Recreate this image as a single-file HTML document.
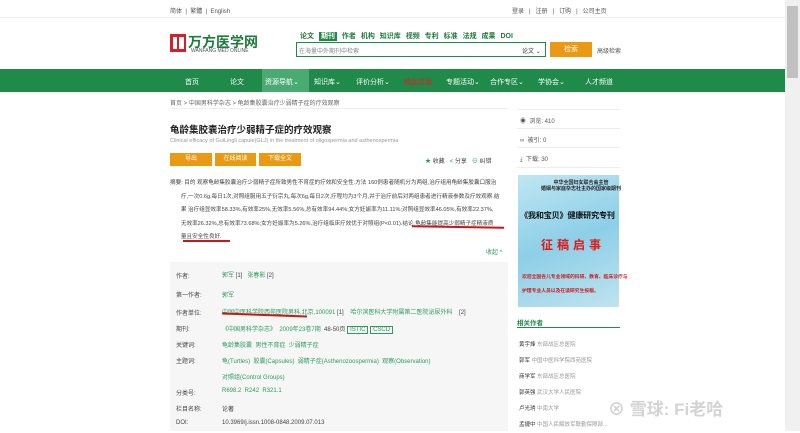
<!DOCTYPE html>
<html><head><meta charset="utf-8"><style>
*{margin:0;padding:0;box-sizing:border-box}
body{width:800px;height:431px;overflow:hidden;background:#fff;font-family:"Liberation Sans","Noto Sans CJK SC",sans-serif;color:#333;position:relative;font-size:6px}
.a{position:absolute;white-space:nowrap}
.g{color:#2e9b5f}
.btn{position:absolute;background:#e99a12;color:#fff;font-size:6px;text-align:center;line-height:13px;height:13px}
.lab{position:absolute;left:176px;color:#444;font-size:6px}
.val{position:absolute;left:222px;font-size:6px;color:#2e9b5f;white-space:nowrap}
.nav span{position:absolute;top:77px;color:#fff;font-size:7px}
</style></head><body>
<div class="a" style="left:170px;top:6px;color:#555">简体 &nbsp;|&nbsp; 繁體 &nbsp;|&nbsp; English</div>
<div class="a" style="left:512px;top:6px;color:#555">登录 &nbsp;&nbsp;| &nbsp;&nbsp;注册 &nbsp;&nbsp;| &nbsp;&nbsp;订购 &nbsp;&nbsp;| &nbsp;&nbsp;公司主页</div>
<div class="a" style="left:0;top:17px;width:785px;height:1px;background:#eee"></div>
<div class="a" style="left:170px;top:34px;width:16px;height:18px;background:#d3202a"></div>
<div class="a" style="left:173px;top:37px;width:4px;height:12px;background:#fff"></div>
<div class="a" style="left:179px;top:37px;width:5px;height:12px;background:#fff"></div>
<div class="a" style="left:188px;top:32px;font-size:14px;font-weight:bold;color:#1f7a3c">万方医学网</div>
<div class="a" style="left:191px;top:48px;font-size:5px;color:#555">WANFANG MED ONLINE</div>
<div class="a" style="left:300px;top:31px;font-size:7px;font-weight:bold;color:#1f7a3c;word-spacing:3px">论文 <span style="background:#1f8a4a;color:#fff;padding:1px 2px">期刊</span> 作者 机构 知识库 视频 专利 标准 法规 成果 DOI</div>
<div class="a" style="left:296px;top:42px;width:250px;height:15px;border:1px solid #1f8a4a;background:#fff"></div>
<div class="a" style="left:299px;top:46px;color:#888">在海量中外期刊中检索</div>
<div class="a" style="left:522px;top:46px;color:#333">论文 ⌄</div>
<div class="a" style="left:550px;top:42px;width:42px;height:15px;background:#e99a12;color:#fff;text-align:center;line-height:15px;font-size:7px">检索</div>
<div class="a" style="left:597px;top:46px;color:#555">高级检索</div>
<div class="a nav" style="left:0;top:69px;width:785px;height:23px;background:#1f8a4a">
<div class="a" style="left:262px;top:0;width:47px;height:23px;background:#4aab72"></div>
</div>
<div class="nav"><span style="left:185px">首页</span><span style="left:230px">论文</span><span style="left:265px">资源导航⌄</span><span style="left:314px">知识库⌄</span><span style="left:356px">评价分析⌄</span><span style="left:404px;color:#e02020">精品资源</span><span style="left:446px">专题活动⌄</span><span style="left:490px">合作专区⌄</span><span style="left:538px">学协会⌄</span><span style="left:585px">人才频道</span></div>
<div class="a" style="left:170px;top:98px;color:#666">首页 &gt; 中国男科学杂志 &gt; 龟龄集胶囊治疗少弱精子症的疗效观察</div>
<div class="a" style="left:170px;top:108px;width:338px;height:1px;background:#eee"></div>
<div class="a" style="left:170px;top:122px;font-size:9.5px;font-weight:bold;color:#222">龟龄集胶囊治疗少弱精子症的疗效观察</div>
<div class="a" style="left:170px;top:138px;font-size:5.5px;color:#999">Clinical efficacy of GuiLingli capule(GLJ) in the treatment of oligospermia and asthenospermia</div>
<div class="btn" style="left:170px;top:153px;width:42px">导出</div>
<div class="btn" style="left:215px;top:153px;width:41px">在线阅读</div>
<div class="btn" style="left:259px;top:153px;width:42px">下载全文</div>
<div class="a" style="left:425px;top:156px;color:#444"><span class="g">★</span> 收藏 &nbsp;&nbsp;<span class="g">&lt;</span> 分享 &nbsp;&nbsp;<span class="g">⊖</span> 纠错</div>
<div class="a" style="left:170px;top:177px;color:#444;line-height:13.5px;white-space:normal;width:338px;font-size:5.6px">摘要: 目的 观察龟龄集胶囊治疗少弱精子症所致男性不育症的疗效和安全性.方法 160例患者随机分为两组,治疗组用龟龄集胶囊口服治<br>&nbsp;&nbsp;&nbsp;&nbsp;&nbsp;&nbsp;&nbsp;疗,一次0.6g,每日1次,对照组服用五子衍宗丸,每次6g,每日2次,疗程均为3个月,并于治疗前后对两组患者进行精液参数及疗效观察.结<br>&nbsp;&nbsp;&nbsp;&nbsp;&nbsp;&nbsp;&nbsp;果 治疗组显效率58.33%,有效率25%,无效率5.56%,总有效率94.44%;女方妊娠率为11.11%;对照组显效率46.05%,有效率22.37%,<br>&nbsp;&nbsp;&nbsp;&nbsp;&nbsp;&nbsp;&nbsp;无效率26.32%,总有效率73.68%;女方妊娠率为5.26%,治疗组临床疗效优于对照组(P&lt;0.01).结论 龟龄集能提高少弱精子症精液质<br>&nbsp;&nbsp;&nbsp;&nbsp;&nbsp;&nbsp;&nbsp;量且安全性良好.</div>
<div class="a" style="left:412px;top:226px;width:92px;height:2px;background:#c81818;transform:rotate(1deg)"></div>
<div class="a" style="left:183px;top:240px;width:47px;height:1.5px;background:#c81818"></div>
<div class="a" style="left:486px;top:247px;color:#2e9b5f">收起 ^</div>
<div class="a" style="left:170px;top:262px;width:338px;height:169px;background:#f6f6f6"></div>
<div class="lab" style="top:271px">作者:</div><div class="val" style="top:270px">郭军 <span style="color:#444">[1]</span> &nbsp;&nbsp;张春影 <span style="color:#444">[2]</span></div>
<div class="lab" style="top:290px">第一作者:</div><div class="val" style="top:290px">郭军</div>
<div class="lab" style="top:308px">作者单位:</div><div class="val" style="top:307px">中国中医科学院西苑医院男科,北京,100091 <span style="color:#444">[1]</span> &nbsp;&nbsp;&nbsp;哈尔滨医科大学附属第二医院泌尿外科 &nbsp;&nbsp;&nbsp;<span style="color:#444">[2]</span></div>
<div class="a" style="left:222px;top:314px;width:85px;height:1.5px;background:#c81818;transform:rotate(2deg)"></div>
<div class="lab" style="top:324px">期刊:</div><div class="val" style="top:324px">《中国男科学杂志》 &nbsp;2009年23卷7期 &nbsp;<span style="color:#444">48-50页</span> <span style="border:1px solid #2e9b5f;padding:0 2px">ISTIC</span> <span style="border:1px solid #2e9b5f;padding:0 2px">CSCD</span></div>
<div class="lab" style="top:340px">关键词:</div><div class="val" style="top:340px">龟龄集胶囊 &nbsp;男性不育症 &nbsp;少弱精子症</div>
<div class="lab" style="top:356px">主题词:</div><div class="val" style="top:356px">龟(Turtles) &nbsp;胶囊(Capsules) &nbsp;弱精子症(Asthenozoospermia) &nbsp;观察(Observation)</div>
<div class="val" style="top:372px">对照组(Control Groups)</div>
<div class="lab" style="top:388px">分类号:</div><div class="val" style="top:388px">R698.2 &nbsp;R242 &nbsp;R321.1</div>
<div class="lab" style="top:404px">栏目名称:</div><div class="val" style="top:404px;color:#444">论著</div>
<div class="lab" style="top:420px">DOI:</div><div class="val" style="top:420px;color:#444">10.3969/j.issn.1008-0848.2009.07.013</div>
<div class="a" style="left:517px;top:109px;width:103px;height:1px;background:#eee"></div>
<div class="a" style="left:520px;top:116px;color:#555">◉ &nbsp;浏览: 410</div>
<div class="a" style="left:517px;top:128px;width:103px;height:1px;background:#eee"></div>
<div class="a" style="left:520px;top:135px;color:#555">∞ &nbsp;被引: 0</div>
<div class="a" style="left:517px;top:147px;width:103px;height:1px;background:#eee"></div>
<div class="a" style="left:520px;top:154px;color:#555">⤓ &nbsp;下载: 30</div>
<div class="a" style="left:517px;top:167px;width:103px;height:1px;background:#eee"></div>
<div class="a" style="left:518px;top:175px;width:101px;height:132px;background:linear-gradient(160deg,#bfe6f3,#8dcfe7 50%,#bfe3ef)"></div>
<div class="a" style="left:541px;top:180px;font-size:5px;color:#222;font-weight:bold;text-align:center;line-height:6px">中华全国妇女联合会主管<br>婚姻与家庭杂志社主办的国家级期刊</div>
<div class="a" style="left:520px;top:209px;font-size:8.2px;font-weight:bold;color:#111;letter-spacing:-0.3px">《我和宝贝》健康研究专刊</div>
<div class="a" style="left:541px;top:236px;font-size:12px;font-weight:bold;color:#e01818;letter-spacing:4px">征稿启事</div>
<div class="a" style="left:522px;top:271px;font-size:4.8px;color:#d01818;font-weight:bold;line-height:14px">欢迎全国各儿专业领域的科研、教育、临床诊疗与<br>护理专业人员以及在读研究生投稿。</div>
<div class="a" style="left:517px;top:317px;font-size:6.5px;color:#1f8a4a;font-weight:bold">相关作者</div>
<div class="a" style="left:517px;top:327px;width:103px;height:1px;background:#1f8a4a"></div>
<div class="a" style="left:519px;top:337px;line-height:16px;color:#333;font-size:5.5px">黄宇烽 <span style="color:#999">东部战区总医院</span><br>郭军 <span style="color:#999">中国中医科学院西苑医院</span><br>商学军 <span style="color:#999">东部战区总医院</span><br>郭英强 <span style="color:#999">武汉大学人民医院</span><br>卢光琇 <span style="color:#999">中南大学</span><br>孟捷中 <span style="color:#999">中国人民解放军联勤保障部...</span></div>
<div class="a" style="left:608px;top:395px;font-size:17px;color:rgba(205,205,205,0.85);font-weight:bold">⊗ 雪球: Fi老哈</div>
<div class="a" style="left:785px;top:0;width:15px;height:431px;background:#f0f0f0"></div>
<div class="a" style="left:787px;top:6px;width:11px;height:72px;background:#c1c1c1"></div>
</body></html>
